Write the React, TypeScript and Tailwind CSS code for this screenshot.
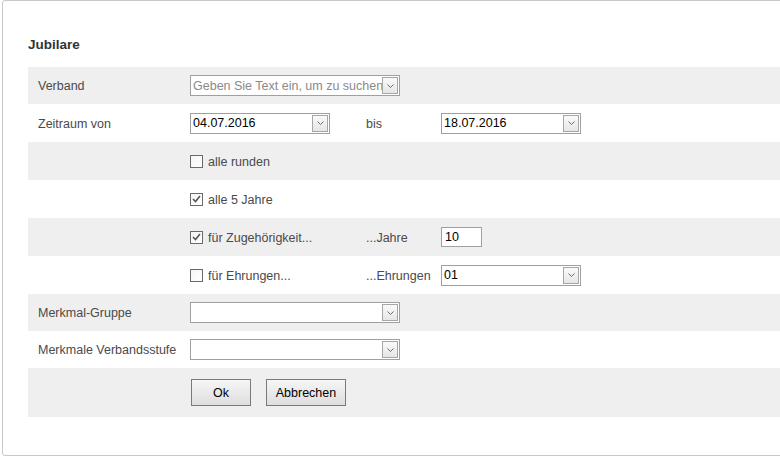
import React from 'react';

const font = { fontFamily: '"Liberation Sans", Arial, sans-serif' };

const Chevron: React.FC = () => (
  <span className="flex h-[17px] w-[16px] shrink-0 items-center justify-center border border-[#a6a6a6] bg-gradient-to-b from-[#fafafa] to-[#e6e6e6]">
    <svg width="7" height="4" viewBox="0 0 7 4" fill="none">
      <path d="M0.5 0.5 L3.5 3.5 L6.5 0.5" stroke="#6b6b6b" strokeWidth="1" />
    </svg>
  </span>
);

interface SelectBoxProps {
  value?: string;
  placeholder?: string;
  width: string;
}

const SelectBox: React.FC<SelectBoxProps> = ({ value, placeholder, width }) => (
  <div className={`flex h-[21px] items-center justify-between border border-[#a0a0a0] bg-white pl-[2px] pr-[1px] ${width}`}>
    <span className={`overflow-hidden whitespace-nowrap pt-[1px] text-[12.5px] leading-none ${value ? 'text-black' : 'text-[#8a8a8a]'}`}>
      {value || placeholder || ''}
    </span>
    <Chevron />
  </div>
);

const CheckBox: React.FC<{ checked?: boolean; label: string }> = ({ checked, label }) => (
  <label className="flex items-center gap-[5px] text-[12.5px] text-[#4a4a4a]">
    <span className="flex h-[13px] w-[13px] items-center justify-center border border-[#6a6a6a] bg-gradient-to-br from-[#f4f4f4] to-white">
      {checked && (
        <svg width="9" height="8" viewBox="0 0 9 8" fill="none">
          <path d="M1 4 L3.5 6.5 L8 1" stroke="#555" strokeWidth="1.6" />
        </svg>
      )}
    </span>
    <span className="pt-[2px]">{label}</span>
  </label>
);

const Row: React.FC<{ gray?: boolean; label?: string; h?: string; children?: React.ReactNode }> = ({ gray, label, h = 'h-[38px]', children }) => (
  <div className={`flex items-center pl-[10px] ${h} ${gray ? 'bg-[#efefef]' : 'bg-white'}`}>
    <div className="w-[152px] shrink-0 pt-[2px] text-[12.5px] text-[#4a4a4a]">{label}</div>
    <div className="flex items-center">{children}</div>
  </div>
);

const SubLabel: React.FC<{ text: string }> = ({ text }) => (
  <div className="ml-[36px] w-[75px] pt-[2px] text-[12.5px] text-[#4a4a4a]">{text}</div>
);

const Btn: React.FC<{ children: React.ReactNode; width: string }> = ({ children, width }) => (
  <button className={`h-[27px] ${width} border border-[#7a7a7a] bg-gradient-to-b from-[#f6f6f6] to-[#dedede] pt-[1px] text-[12.5px] text-black`}>
    {children}
  </button>
);

export default function App() {
  return (
    <div className="h-[465px] w-[780px] overflow-hidden bg-white" style={font}>
      <div className="ml-[2px] h-[456px] w-[820px] rounded-[3px] border border-[#c8c8c8] pl-[25px] pr-[40px]">
        <h2 className="mb-[14px] pt-[36px] text-[13.5px] font-bold leading-[16px] text-[#333]">Jubilare</h2>

        <Row gray label="Verband" h="h-[37px]">
          <SelectBox width="w-[210px]" placeholder="Geben Sie Text ein, um zu suchen" />
        </Row>
        <Row label="Zeitraum von">
          <SelectBox width="w-[140px]" value="04.07.2016" />
          <SubLabel text="bis" />
          <SelectBox width="w-[140px]" value="18.07.2016" />
        </Row>
        <Row gray>
          <CheckBox label="alle runden" />
        </Row>
        <Row>
          <CheckBox checked label="alle 5 Jahre" />
        </Row>
        <Row gray>
          <div className="w-[176px]">
            <CheckBox checked label="für Zugehörigkeit..." />
          </div>
          <div className="w-[75px] pt-[2px] text-[12.5px] text-[#4a4a4a]">...Jahre</div>
          <div className="flex h-[20px] w-[41px] items-center border border-[#a0a0a0] bg-white pl-[3px] pt-[1px] text-[12.5px] text-black">10</div>
        </Row>
        <Row>
          <div className="w-[176px]">
            <CheckBox label="für Ehrungen..." />
          </div>
          <div className="w-[75px] pt-[2px] text-[12.5px] text-[#4a4a4a]">...Ehrungen</div>
          <SelectBox width="w-[140px]" value="01" />
        </Row>
        <Row gray label="Merkmal-Gruppe" h="h-[37px]">
          <SelectBox width="w-[210px]" />
        </Row>
        <Row label="Merkmale Verbandsstufe" h="h-[37px]">
          <SelectBox width="w-[210px]" />
        </Row>
        <Row gray h="h-[49px]">
          <div className="flex items-center gap-[15px] pl-[1px]">
            <Btn width="w-[60px]">Ok</Btn>
            <Btn width="w-[80px]">Abbrechen</Btn>
          </div>
        </Row>
      </div>
    </div>
  );
}
